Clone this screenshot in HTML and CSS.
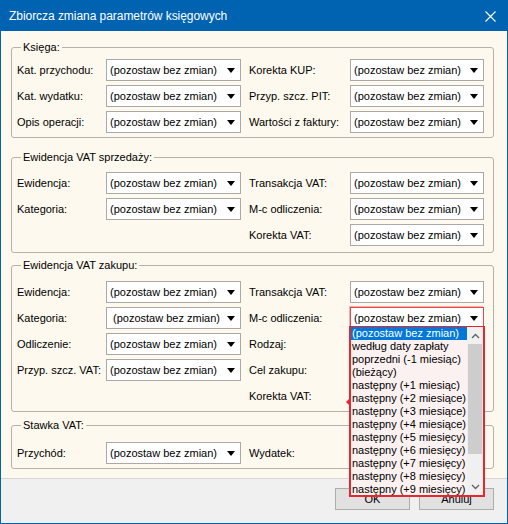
FILE: index.html
```html
<!DOCTYPE html>
<html lang="pl">
<head>
<meta charset="utf-8">
<title>Zbiorcza zmiana parametrów księgowych</title>
<link rel="stylesheet" href="styles.css">
</head>
<body>
<div class="window">
  <div class="titlebar">
    <span class="title">Zbiorcza zmiana parametrów księgowych</span>
    <svg class="close" width="11" height="11" viewBox="0 0 11 11"><path d="M0.5 0.5 L10.5 10.5 M10.5 0.5 L0.5 10.5" stroke="#fff" stroke-width="1.1" fill="none"/></svg>
  </div>
  <div class="content">
    <fieldset class="grp g1">
      <legend>Księga:</legend>
      <div class="rows">
        <span class="lbl">Kat. przychodu:</span><div class="combo"><span>(pozostaw bez zmian)</span><i class="arr"></i></div><span></span>
        <span class="lbl">Korekta KUP:</span><div class="combo"><span>(pozostaw bez zmian)</span><i class="arr"></i></div>
        <span class="lbl">Kat. wydatku:</span><div class="combo"><span>(pozostaw bez zmian)</span><i class="arr"></i></div><span></span>
        <span class="lbl">Przyp. szcz. PIT:</span><div class="combo"><span>(pozostaw bez zmian)</span><i class="arr"></i></div>
        <span class="lbl">Opis operacji:</span><div class="combo"><span>(pozostaw bez zmian)</span><i class="arr"></i></div><span></span>
        <span class="lbl">Wartości z faktury:</span><div class="combo"><span>(pozostaw bez zmian)</span><i class="arr"></i></div>
      </div>
    </fieldset>
    <fieldset class="grp g2">
      <legend>Ewidencja VAT sprzedaży:</legend>
      <div class="rows">
        <span class="lbl">Ewidencja:</span><div class="combo"><span>(pozostaw bez zmian)</span><i class="arr"></i></div><span></span>
        <span class="lbl">Transakcja VAT:</span><div class="combo"><span>(pozostaw bez zmian)</span><i class="arr"></i></div>
        <span class="lbl">Kategoria:</span><div class="combo"><span>(pozostaw bez zmian)</span><i class="arr"></i></div><span></span>
        <span class="lbl">M-c odliczenia:</span><div class="combo"><span>(pozostaw bez zmian)</span><i class="arr"></i></div>
        <span></span><span></span><span></span>
        <span class="lbl">Korekta VAT:</span><div class="combo"><span>(pozostaw bez zmian)</span><i class="arr"></i></div>
      </div>
    </fieldset>
    <fieldset class="grp g3">
      <legend>Ewidencja VAT zakupu:</legend>
      <div class="rows">
        <span class="lbl">Ewidencja:</span><div class="combo"><span>(pozostaw bez zmian)</span><i class="arr"></i></div><span></span>
        <span class="lbl">Transakcja VAT:</span><div class="combo"><span>(pozostaw bez zmian)</span><i class="arr"></i></div>
        <span class="lbl">Kategoria:</span><div class="combo"><span class="shift">(pozostaw bez zmian)</span><i class="arr"></i></div><span></span>
        <span class="lbl">M-c odliczenia:</span><div class="combo focus"><span>(pozostaw bez zmian)</span><i class="arr"></i></div>
        <span class="lbl">Odliczenie:</span><div class="combo"><span>(pozostaw bez zmian)</span><i class="arr"></i></div><span></span>
        <span class="lbl">Rodzaj:</span><div class="combo"></div>
        <span class="lbl">Przyp. szcz. VAT:</span><div class="combo"><span>(pozostaw bez zmian)</span><i class="arr"></i></div><span></span>
        <span class="lbl">Cel zakupu:</span><div class="combo"></div>
        <span></span><span></span><span></span>
        <span class="lbl">Korekta VAT:</span><div class="combo"></div>
      </div>
    </fieldset>
    <fieldset class="grp g4">
      <legend>Stawka VAT:</legend>
      <div class="rows">
        <span class="lbl">Przychód:</span><div class="combo"><span>(pozostaw bez zmian)</span><i class="arr"></i></div><span></span>
        <span class="lbl">Wydatek:</span><div class="combo"></div>
      </div>
    </fieldset>
  </div>
  <div class="footer">
    <button class="btn">OK</button>
    <button class="btn">Anuluj</button>
  </div>
  <div class="dropdown">
    <ul class="items">
      <li class="sel">(pozostaw bez zmian)</li>
      <li>według daty zapłaty</li>
      <li>poprzedni (-1 miesiąc)</li>
      <li>(bieżący)</li>
      <li>następny (+1 miesiąc)</li>
      <li>następny (+2 miesiące)</li>
      <li>następny (+3 miesiące)</li>
      <li>następny (+4 miesiące)</li>
      <li>następny (+5 miesięcy)</li>
      <li>następny (+6 miesięcy)</li>
      <li>następny (+7 miesięcy)</li>
      <li>następny (+8 miesięcy)</li>
      <li>następny (+9 miesięcy)</li>
    </ul>
    <div class="scroll">
      <div class="sbtn"><svg width="9" height="6" viewBox="0 0 9 6"><path d="M1 5 L4.5 1.5 L8 5" stroke="#606060" stroke-width="1.3" fill="none"/></svg></div>
      <div class="thumb"></div>
      <div class="track"></div>
      <div class="sbtn"><svg width="9" height="6" viewBox="0 0 9 6"><path d="M1 1 L4.5 4.5 L8 1" stroke="#606060" stroke-width="1.3" fill="none"/></svg></div>
    </div>
  </div>
</div>
</body>
</html>
```

FILE: styles.css
```css
html, body {
  margin: 0;
  padding: 0;
  background: #ffffff;
}
body {
  font-family: "Liberation Sans", Arial, sans-serif;
  font-size: 11px;
  color: #000;
}
.window {
  position: relative;
  width: 508px;
  height: 524px;
  box-sizing: border-box;
  border: 1px solid #0063b1;
  background: #f0f0f0;
  overflow: hidden;
}
.titlebar {
  height: 30px;
  background: #0063b1;
  color: #fff;
  display: flex;
  align-items: center;
  justify-content: space-between;
  padding: 0 11px 0 8px;
}
.title {
  font-size: 12px;
  letter-spacing: -0.05px;
}
.close {
  display: block;
}
.content {
  height: 447px;
  box-sizing: border-box;
  background: #fef9ee;
  padding: 0 13px 0 10px;
  display: flex;
  flex-direction: column;
}
.grp {
  margin: 0;
  border: 1px solid #b4b2ad;
  border-radius: 3px;
  padding: 0 8px 4px 5px;
  min-width: 0;
}
.grp legend {
  padding: 0 2px;
  margin-left: 4px;
  line-height: 13px;
  font-size: 11px;
}
.g1 { margin-top: 10px; padding-top: 5px; padding-bottom: 4px; }
.g2 { margin-top: 13px; padding-top: 8px; padding-bottom: 6px; }
.g3 { margin-top: 6px; padding-top: 9px; padding-bottom: 4px; }
.g4 { margin-top: 7px; padding-top: 10px; padding-bottom: 4px; }
.rows {
  display: grid;
  grid-template-columns: 89px 135px 8px 101px 134px;
  grid-auto-rows: 22px;
  row-gap: 4px;
  align-items: center;
}
.lbl {
  white-space: nowrap;
}
.combo {
  height: 22px;
  box-sizing: border-box;
  border: 1px solid #aaa9a6;
  background: #fff;
  display: flex;
  align-items: center;
  justify-content: space-between;
  padding: 0 5px 0 3px;
  white-space: nowrap;
}
.combo .shift {
  padding-left: 3px;
}
.combo.focus {
  border-color: #e8484c;
  box-shadow: -1px -1px 0 0 rgba(232, 38, 43, 0.35);
}
.arr {
  width: 0;
  height: 0;
  border-left: 4.5px solid transparent;
  border-right: 4.5px solid transparent;
  border-top: 5px solid #000;
}
.footer {
  height: 45px;
  box-sizing: border-box;
  border-top: 1px solid #d6d6d6;
  display: flex;
  justify-content: flex-end;
  align-items: flex-start;
  gap: 9px;
  padding: 9px 13px 0 0;
}
.btn {
  width: 75px;
  height: 22px;
  background: #e1e1e1;
  border: 1px solid #adadad;
  font-family: "Liberation Sans", Arial, sans-serif;
  font-size: 11px;
  color: #000;
  padding: 0;
  margin: 0;
}
.dropdown {
  position: absolute;
  left: 348px;
  top: 325px;
  width: 136px;
  height: 171px;
  box-sizing: border-box;
  border: 2px solid #e8262b;
  border-top-width: 1px;
  background: #fbf1f1;
  display: flex;
}
.dropdown::before {
  content: "";
  position: absolute;
  left: -5px;
  top: 72px;
  border-right: 3px solid #e8262b;
  border-top: 3px solid transparent;
  border-bottom: 3px solid transparent;
}
.items {
  list-style: none;
  margin: 0;
  padding: 0;
  flex: 1;
  overflow: hidden;
  font-size: 11px;
}
.items li {
  height: 13px;
  line-height: 13px;
  padding-left: 1px;
  white-space: nowrap;
}
.items li.sel {
  background: #0078d7;
  color: #fff;
}
.scroll {
  width: 16px;
  background: #f0f0f0;
  display: flex;
  flex-direction: column;
}
.sbtn {
  height: 17px;
  display: flex;
  align-items: center;
  justify-content: center;
}
.thumb {
  height: 110px;
  margin: 0 1px;
  background: #cdcdcd;
}
.track {
  flex: 1;
}
```
